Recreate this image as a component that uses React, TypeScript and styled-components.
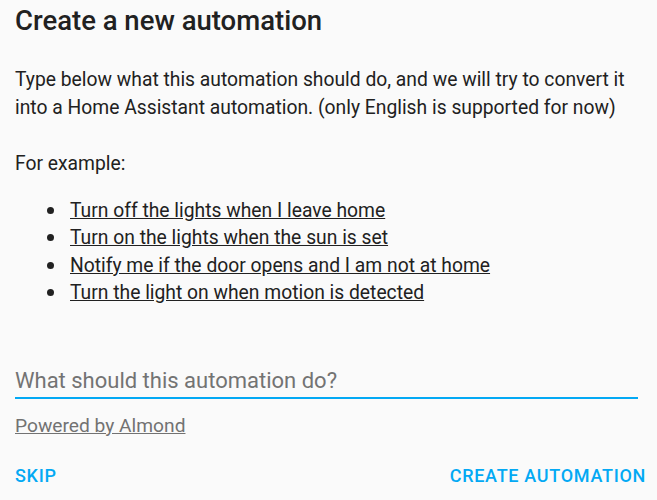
import React from "react";
import styled, { createGlobalStyle } from "styled-components";

const Global = createGlobalStyle`
  html, body { margin: 0; padding: 0; background: #fafafa; }
  body { font-family: Roboto, "Noto Sans", sans-serif; color: #212121; }
`;

const Dialog = styled.div`
  width: 657px;
  height: 500px;
  box-sizing: border-box;
  padding: 5px 19px 0 15px;
  display: flex;
  flex-direction: column;
  background: #fafafa;
`;

const Title = styled.h2`
  margin: 0;
  font-size: 27.5px;
  line-height: 32px;
  font-weight: 500;
  color: #212121;
`;

const Paragraph = styled.p<{ $top: number }>`
  margin: ${(p) => p.$top}px 0 0;
  font-size: 19.3px;
  line-height: 27.5px;
  color: #212121;
`;

const List = styled.ul`
  margin: 19px 0 0;
  padding: 0 0 0 32px;
  list-style: none;
  font-size: 19.3px;
  line-height: 27.5px;
`;

const Item = styled.li`
  display: flex;
  align-items: center;
`;

const Bullet = styled.span`
  width: 7px;
  height: 7px;
  border-radius: 50%;
  background: #212121;
  margin-right: 16px;
  flex: none;
`;

const Link = styled.a`
  color: #212121;
  text-decoration: underline;
  cursor: pointer;
`;

const Field = styled.div`
  margin-top: 60px;
  border-bottom: 2px solid #03a9f4;
  padding-bottom: 2px;
`;

const Input = styled.input`
  border: none;
  outline: none;
  background: transparent;
  width: 100%;
  padding: 0;
  font-family: Roboto, sans-serif;
  font-size: 22px;
  line-height: 28px;
  color: #212121;
  &::placeholder { color: #737373; }
`;

const Powered = styled.a`
  margin-top: 15px;
  align-self: flex-start;
  font-size: 19.2px;
  line-height: 24px;
  color: #727272;
  text-decoration: underline;
`;

const Actions = styled.div`
  margin-top: 26px;
  margin-right: -8px;
  display: flex;
  justify-content: space-between;
`;

const Button = styled.button`
  border: none;
  background: transparent;
  padding: 0;
  font-family: Roboto, sans-serif;
  font-size: 18px;
  font-weight: 500;
  letter-spacing: 0.7px;
  text-transform: uppercase;
  color: #03a9f4;
  line-height: 24px;
  cursor: pointer;
`;

const examples = [
  "Turn off the lights when I leave home",
  "Turn on the lights when the sun is set",
  "Notify me if the door opens and I am not at home",
  "Turn the light on when motion is detected",
];

export default function App() {
  return (
    <>
      <Global />
      <Dialog>
        <Title>Create a new automation</Title>
        <Paragraph $top={29}>
          Type below what this automation should do, and we will try to convert it
          into a Home Assistant automation. (only English is supported for now)
        </Paragraph>
        <Paragraph $top={29}>For example:</Paragraph>
        <List>
          {examples.map((e) => (
            <Item key={e}>
              <Bullet />
              <Link>{e}</Link>
            </Item>
          ))}
        </List>
        <Field>
          <Input placeholder="What should this automation do?" />
        </Field>
        <Powered>Powered by Almond</Powered>
        <Actions>
          <Button>Skip</Button>
          <Button>Create automation</Button>
        </Actions>
      </Dialog>
    </>
  );
}
